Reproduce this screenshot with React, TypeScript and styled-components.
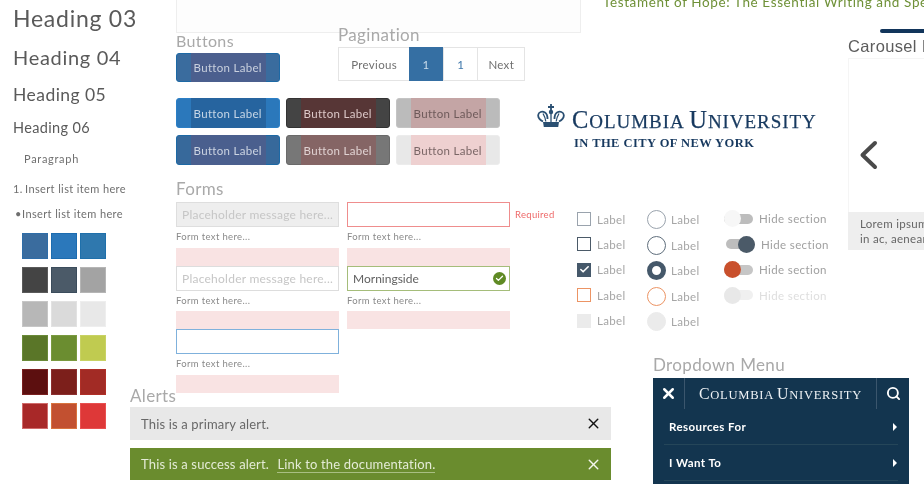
import React from "react";
import styled, { createGlobalStyle } from "styled-components";
import { X, Search, Check } from "lucide-react";

const Global = createGlobalStyle`
  html, body { margin: 0; padding: 0; background: #fff; }
  body { font-family: Lato, "Noto Sans", sans-serif; width: 924px; height: 484px; overflow: hidden; }
`;

const Board = styled.div`
  position: relative;
  width: 924px;
  height: 484px;
  overflow: hidden;
  background: #fff;
  filter: blur(0.6px);
`;

const Area = styled.section<{ $x: number; $y: number; $w?: number; $h?: number }>`
  position: absolute;
  left: ${(p) => p.$x}px;
  top: ${(p) => p.$y}px;
  ${(p) => (p.$w ? `width: ${p.$w}px;` : "")}
  ${(p) => (p.$h ? `height: ${p.$h}px;` : "")}
`;

const SectionTitle = styled.div<{ $size?: number }>`
  font-size: ${(p) => p.$size ?? 17}px;
  line-height: 20px;
  color: #a9a9a9;
  letter-spacing: 0.35px;
  white-space: nowrap;
`;

/* Typography column */
const Type = styled.div`
  display: flex;
  flex-direction: column;
  color: #5a5a5a;
`;
const Head = styled.div<{ $size: number; $h: number; $spacing: number }>`
  font-size: ${(p) => p.$size}px;
  height: ${(p) => p.$h}px;
  line-height: ${(p) => p.$h}px;
  letter-spacing: ${(p) => p.$spacing}px;
  white-space: nowrap;
`;
const Small = styled.div<{ $indent: number; $h: number; $spacing?: number }>`
  padding-left: ${(p) => p.$indent}px;
  height: ${(p) => p.$h}px;
  line-height: ${(p) => p.$h}px;
  font-size: 11px;
  letter-spacing: ${(p) => p.$spacing ?? 0.42}px;
  color: #6f6f6f;
  white-space: nowrap;
`;
const Marker = styled.span<{ $w: number }>`
  display: inline-block;
  width: ${(p) => p.$w}px;
`;

/* Swatches */
const Swatches = styled.div`
  display: grid;
  grid-template-columns: repeat(3, 26px);
  grid-auto-rows: 26px;
  column-gap: 3px;
  row-gap: 8px;
`;
const Swatch = styled.div<{ $c: string; $b: string }>`
  background: ${(p) => p.$c};
  box-sizing: border-box;
  border: 1px solid ${(p) => p.$b};
`;

/* Empty panel on top */
const TopPanel = styled.div`
  box-sizing: border-box;
  height: 100%;
  background: #fdfdfd;
  border: 1px solid #eeeeee;
  border-top: 0;
`;

/* Buttons */
const ButtonRows = styled.div`
  display: flex;
  flex-direction: column;
  gap: 7px;
`;
const ButtonRow = styled.div`
  display: flex;
  gap: 6.5px;
`;
const LabelButton = styled.button<{ $bg: string; $edge: string; $overlay: string; $fg: string; $h?: number }>`
  position: relative;
  width: 103.5px;
  height: ${(p) => p.$h ?? 30}px;
  padding: 0;
  background: ${(p) => p.$bg};
  border: 1px solid ${(p) => p.$edge};
  border-radius: 3px;
  color: ${(p) => p.$fg};
  font-family: inherit;
  font-size: 11.5px;
  letter-spacing: 0.3px;
  &::before {
    content: "";
    position: absolute;
    left: 14px;
    right: 13px;
    top: -1px;
    bottom: -1px;
    background: ${(p) => p.$overlay};
  }
  & > span { position: relative; }
`;

/* Pagination */
const Pager = styled.nav`
  display: flex;
  height: 34px;
  box-sizing: border-box;
  border: 1px solid #e4e4e4;
  background: #fff;
`;
const PageCell = styled.div<{ $w: number; $active?: boolean; $link?: boolean }>`
  width: ${(p) => p.$w}px;
  display: flex;
  align-items: center;
  justify-content: center;
  font-size: 11.5px;
  letter-spacing: 0.3px;
  margin: ${(p) => (p.$active ? "-1px 0" : "0")};
  background: ${(p) => (p.$active ? "#356fa3" : "#fff")};
  color: ${(p) => (p.$active ? "#c9dbea" : p.$link ? "#3f78ab" : "#707070")};
  border-left: ${(p) => (p.$active ? "none" : "1px solid #e4e4e4")};
  &:first-child { border-left: 0; }
`;

/* Logo */
const Logo = styled.div`
  display: flex;
  gap: 7px;
  align-items: flex-start;
  color: #17395f;
  font-family: "Liberation Serif", serif;
`;
const LogoText = styled.div`
  display: flex;
  flex-direction: column;
  white-space: nowrap;
`;
const LogoMain = styled.div`
  margin-top: 3px;
  font-size: 19px;
  line-height: 26px;
  letter-spacing: 0.95px;
  text-transform: uppercase;
  -webkit-text-stroke: 0.25px #17395f;
`;
const Cap = styled.span<{ $size: number }>`
  font-size: ${(p) => p.$size}px;
`;
const LogoSub = styled.div`
  font-size: 12.5px;
  line-height: 14px;
  font-weight: bold;
  margin: 1px 0 0 2px;
  letter-spacing: 0.45px;
`;

/* Forms */
const FormGrid = styled.div`
  display: grid;
  grid-template-columns: 163px 163px;
  column-gap: 8px;
`;
const FormCol = styled.div`
  display: flex;
  flex-direction: column;
`;
const Field = styled.div<{ $bg?: string; $edge: string }>`
  position: relative;
  box-sizing: border-box;
  height: 25px;
  padding: 0 5px;
  display: flex;
  align-items: center;
  background: ${(p) => p.$bg ?? "#fff"};
  border: 1px solid ${(p) => p.$edge};
  font-size: 12px;
  letter-spacing: 0.24px;
  color: #c6c6c6;
  white-space: nowrap;
`;
const FieldValue = styled.span`
  color: #5f5f5f;
  letter-spacing: 0;
`;
const Hint = styled.div<{ $h?: number }>`
  height: ${(p) => p.$h ?? 21}px;
  line-height: 20px;
  font-size: 9.5px;
  letter-spacing: 0.35px;
  color: #8a8a8a;
`;
const PinkBar = styled.div`
  height: 18px;
  background: #f9e3e3;
`;
const Required = styled.span`
  position: absolute;
  left: 167px;
  top: 6px;
  font-size: 9.5px;
  letter-spacing: 0.3px;
  color: #ee6a6a;
`;
const OkBadge = styled.span`
  position: absolute;
  right: 3px;
  top: 5px;
  width: 13px;
  height: 13px;
  border-radius: 50%;
  background: #5f8a24;
  color: #fff;
  display: flex;
  align-items: center;
  justify-content: center;
`;

/* Choice lists */
const ChoiceList = styled.div<{ $gap: number }>`
  display: flex;
  flex-direction: column;
  gap: ${(p) => p.$gap}px;
`;
const Choice = styled.div<{ $gap: number; $h: number }>`
  display: flex;
  align-items: center;
  gap: ${(p) => p.$gap}px;
  height: ${(p) => p.$h}px;
  font-size: 11.5px;
  letter-spacing: 0.35px;
  color: #a6a6a6;
  white-space: nowrap;
`;
const CheckBox = styled.span<{ $edge: string; $bg?: string }>`
  box-sizing: border-box;
  width: 14px;
  height: 14px;
  background: ${(p) => p.$bg ?? "#fff"};
  border: 1px solid ${(p) => p.$edge};
  color: #fff;
  display: flex;
  align-items: center;
  justify-content: center;
`;
const Radio = styled.span<{ $edge: string; $bg?: string; $w?: number }>`
  box-sizing: border-box;
  width: 19px;
  height: 19px;
  border-radius: 50%;
  background: ${(p) => p.$bg ?? "#fff"};
  border: ${(p) => p.$w ?? 1}px solid ${(p) => p.$edge};
`;
const ToggleRow = styled.div<{ $muted?: boolean; $shift?: number }>`
  display: flex;
  align-items: center;
  height: 17px;
  padding-left: ${(p) => p.$shift ?? 0}px;
  font-size: 11.5px;
  letter-spacing: 0.38px;
  color: ${(p) => (p.$muted ? "#dedede" : "#a0a0a0")};
  white-space: nowrap;
`;
const Track = styled.span<{ $bg: string; $on?: boolean }>`
  position: relative;
  display: flex;
  align-items: center;
  justify-content: ${(p) => (p.$on ? "flex-end" : "flex-start")};
  width: 29px;
  height: 10px;
  border-radius: 5px;
  margin-right: 6px;
  background: ${(p) => p.$bg};
`;
const Knob = styled.span<{ $bg: string }>`
  width: 17px;
  height: 17px;
  flex: none;
  border-radius: 50%;
  background: ${(p) => p.$bg};
`;

/* Alerts */
const AlertList = styled.div`
  display: flex;
  flex-direction: column;
  gap: 8px;
`;
const Alert = styled.div<{ $bg: string; $fg: string; $h: number }>`
  box-sizing: border-box;
  height: ${(p) => p.$h}px;
  padding: 0 9px 0 11px;
  display: flex;
  align-items: center;
  justify-content: space-between;
  background: ${(p) => p.$bg};
  color: ${(p) => p.$fg};
  font-size: 13px;
  letter-spacing: 0.16px;
`;
const AlertLink = styled.span`
  margin-left: 5px;
  border-bottom: 1px solid #a9bf83;
  line-height: 14px;
`;
const AlertClose = styled.span<{ $c: string }>`
  display: flex;
  color: ${(p) => p.$c};
`;

/* Dropdown */
const Menu = styled.div`
  height: 106px;
  background: #13354f;
  color: #fff;
  display: flex;
  flex-direction: column;
`;
const MenuHead = styled.div`
  display: grid;
  grid-template-columns: 32px 1fr 33px;
  height: 31px;
`;
const MenuCell = styled.div<{ $divider?: "l" | "r" }>`
  display: flex;
  align-items: center;
  justify-content: center;
  ${(p) => (p.$divider === "r" ? "border-right: 1px solid #3b566d;" : "")}
  ${(p) => (p.$divider === "l" ? "border-left: 1px solid #3b566d;" : "")}
`;
const MenuBrand = styled.div`
  font-family: "Liberation Serif", serif;
  text-transform: uppercase;
  font-size: 12.6px;
  letter-spacing: 0.7px;
  color: #eef2f5;
  white-space: nowrap;
`;
const MenuRow = styled.div`
  margin: 0 11px;
  padding: 0 1px 0 5px;
  height: 35px;
  display: flex;
  align-items: center;
  justify-content: space-between;
  border-bottom: 1px solid #254659;
  font-size: 11.5px;
  font-weight: bold;
  letter-spacing: 0.42px;
`;
const Caret = styled.span`
  width: 0;
  height: 0;
  border-left: 4px solid #fff;
  border-top: 4px solid transparent;
  border-bottom: 4px solid transparent;
`;

/* Carousel */
const Carousel = styled.div`
  display: flex;
  flex-direction: column;
  height: 213px;
`;
const CarouselTitle = styled.div`
  font-family: "Liberation Sans", sans-serif;
  font-size: 16.5px;
  line-height: 18px;
  height: 21px;
  letter-spacing: 0.35px;
  color: #5c5c5c;
  white-space: nowrap;
`;
const CarouselStage = styled.div`
  box-sizing: border-box;
  flex: 1;
  padding: 38px 0 0 10px;
  display: flex;
  align-items: center;
  border: 1px solid #f5f5f5;
  border-bottom: 0;
`;
const Caption = styled.div`
  height: 38px;
  padding: 4px 0 0 12px;
  box-sizing: border-box;
  background: #eeeeee;
  color: #666;
  font-size: 11.5px;
  line-height: 15px;
  letter-spacing: 0.3px;
  white-space: nowrap;
`;
const BookLine = styled.div`
  margin-top: -6px;
  font-size: 13.5px;
  line-height: 16px;
  letter-spacing: 0.62px;
  color: #6f9138;
  white-space: nowrap;
`;
const AccentBar = styled.div`
  height: 4px;
  border-radius: 2px 0 0 2px;
  background: #12355b;
`;

const swatches = [
  ["#3a6c9e", "#2e6da8"], ["#2b78bb", "#1c6cb0"], ["#2f78ae", "#1f70ab"],
  ["#444444", "#5a5a5a"], ["#4b5a68", "#3b4c5c"], ["#a3a3a3", "#b5b5b5"],
  ["#b7b7b7", "#c6c6c6"], ["#dadada", "#e2e2e2"], ["#e8e8e8", "#eeeeee"],
  ["#5a7628", "#6a8a38"], ["#6b8d30", "#7a9a40"], ["#c0cb50", "#c8d264"],
  ["#5c0f0f", "#7a2020"], ["#7c1f1b", "#8c3030"], ["#a22b25", "#b03028"],
  ["#a82828", "#d06a6a"], ["#c25030", "#d8733e"], ["#de3838", "#e85050"],
];

const Crown = () => (
  <svg width="28" height="24" viewBox="0 0 28 24" fill="none" stroke="#2a4f72" strokeWidth="1.8">
    <path d="M14 0v8M11 3h6" />
    <circle cx="14" cy="8" r="2.2" fill="#2a4f72" stroke="none" />
    <path d="M6 17.500C3 16 1 13.500 1.200 11 1.500 8 5 6.800 8 8.500 10 9.800 10.500 12 10.500 15M22 17.500c3-1.500 5-4 4.800-6.500C26.500 8 23 6.800 20 8.500 18 9.800 17.500 12 17.500 15" />
    <path d="M14 10v8M6 9.500c1.500 2.500 2.500 5 2.800 8M22 9.500c-1.500 2.500-2.500 5-2.800 8" strokeWidth="1.300" />
    <path d="M6 18h16l-.8 5H6.800z" fill="#2a4f72" stroke="none" />
  </svg>
);

const Chevron = () => (
  <svg width="19" height="30" viewBox="0 0 19 30" fill="none" stroke="#4a4a4a" strokeWidth="4" strokeLinecap="round" strokeLinejoin="round">
    <path d="M16 3 3.500 15 16 27" />
  </svg>
);

const Lbtn = ({ v }: { v: [string, string, string, string] }) => (
  <LabelButton $bg={v[0]} $edge={v[1]} $overlay={v[2]} $fg={v[3]}>
    <span>Button Label</span>
  </LabelButton>
);

export default function App() {
  return (
    <Board>
      <Global />

      <Area $x={13} $y={3}>
        <Type>
          <Head $size={23} $h={31} $spacing={0.75}>Heading 03</Head>
          <Head $size={20} $h={47} $spacing={0.7}>Heading 04</Head>
          <Head $size={17.5} $h={27} $spacing={0.45}>Heading 05</Head>
          <Head $size={14.5} $h={39} $spacing={0.35}>Heading 06</Head>
          <Small $indent={11} $h={23} $spacing={0.7}>Paragraph</Small>
          <Small $indent={0} $h={37} $spacing={0.38}><Marker $w={12}>1.</Marker>Insert list item here</Small>
          <Small $indent={2} $h={14} $spacing={0.38}><Marker $w={7}>•</Marker>Insert list item here</Small>
        </Type>
      </Area>

      <Area $x={22} $y={233}>
        <Swatches>
          {swatches.map(([c, b], i) => (
            <Swatch key={i} $c={c} $b={b} />
          ))}
        </Swatches>
      </Area>

      <Area $x={176} $y={0} $w={405} $h={33}>
        <TopPanel />
      </Area>

      <Area $x={176} $y={31}>
        <SectionTitle $size={16}>Buttons</SectionTitle>
      </Area>
      <Area $x={176} $y={53}>
        <LabelButton $bg="#3a6c9e" $edge="#1d69a5" $overlay="#4b5f8e" $fg="#c9d0de" $h={29}>
          <span>Button Label</span>
        </LabelButton>
      </Area>
      <Area $x={176} $y={98}>
        <ButtonRows>
          <ButtonRow>
            <Lbtn v={["#2b78bb", "#2b7fc6", "#26649f", "#c6d6e6"]} />
            <Lbtn v={["#444444", "#333333", "#573636", "#ddc8c8"]} />
            <Lbtn v={["#bbbbbb", "#c4c4c4", "#c4a5a5", "#6e5a5a"]} />
          </ButtonRow>
          <ButtonRow>
            <Lbtn v={["#37699b", "#1d69a5", "#4a5f8e", "#ccd4e2"]} />
            <Lbtn v={["#777777", "#6a6a6a", "#856565", "#e0d2d2"]} />
            <Lbtn v={["#e8e8e8", "#ececec", "#eed0d0", "#7a6666"]} />
          </ButtonRow>
        </ButtonRows>
      </Area>

      <Area $x={338} $y={25}>
        <SectionTitle>Pagination</SectionTitle>
      </Area>
      <Area $x={338} $y={47} $w={187}>
        <Pager>
          <PageCell $w={71}>Previous</PageCell>
          <PageCell $w={34} $active>1</PageCell>
          <PageCell $w={34} $link>1</PageCell>
          <PageCell $w={46}>Next</PageCell>
        </Pager>
      </Area>

      <Area $x={537} $y={104}>
        <Logo>
          <Crown />
          <LogoText>
            <LogoMain><Cap $size={24.5}>C</Cap>olumbia <Cap $size={24.5}>U</Cap>niversity</LogoMain>
            <LogoSub>IN THE CITY OF NEW YORK</LogoSub>
          </LogoText>
        </Logo>
      </Area>

      <Area $x={176} $y={179}>
        <SectionTitle>Forms</SectionTitle>
      </Area>
      <Area $x={176} $y={202}>
        <FormGrid>
          <FormCol>
            <Field $bg="#eeeeee" $edge="#dedede">Placeholder message here...</Field>
            <Hint>Form text here...</Hint>
            <PinkBar />
            <Field $edge="#dddddd">Placeholder message here...</Field>
            <Hint $h={20}>Form text here...</Hint>
            <PinkBar />
            <Field $edge="#7fb1dc" />
            <Hint>Form text here...</Hint>
            <PinkBar />
          </FormCol>
          <FormCol>
            <Field $edge="#ef8d8d">
              <Required>Required</Required>
            </Field>
            <Hint>Form text here...</Hint>
            <PinkBar />
            <Field $edge="#a5bd7a">
              <FieldValue>Morningside</FieldValue>
              <OkBadge>
                <Check size={9} strokeWidth={3.5} />
              </OkBadge>
            </Field>
            <Hint $h={20}>Form text here...</Hint>
            <PinkBar />
          </FormCol>
        </FormGrid>
      </Area>

      <Area $x={577} $y={212}>
        <ChoiceList $gap={11.4}>
          <Choice $gap={6} $h={14}><CheckBox $edge="#9aa3ad" />Label</Choice>
          <Choice $gap={6} $h={14}><CheckBox $edge="#4b5a68" />Label</Choice>
          <Choice $gap={6} $h={14}>
            <CheckBox $edge="#45586a" $bg="#45586a"><Check size={11} strokeWidth={3.5} /></CheckBox>
            Label
          </Choice>
          <Choice $gap={6} $h={14}><CheckBox $edge="#ec9464" />Label</Choice>
          <Choice $gap={6} $h={14}><CheckBox $edge="#ebebeb" $bg="#ebebeb" />Label</Choice>
        </ChoiceList>
      </Area>

      <Area $x={647} $y={210}>
        <ChoiceList $gap={6.5}>
          <Choice $gap={5} $h={19}><Radio $edge="#9aa3ad" />Label</Choice>
          <Choice $gap={5} $h={19}><Radio $edge="#5f6e7c" $w={1.5} />Label</Choice>
          <Choice $gap={5} $h={19}><Radio $edge="#45586a" $w={5} />Label</Choice>
          <Choice $gap={5} $h={19}><Radio $edge="#ec9464" />Label</Choice>
          <Choice $gap={5} $h={19}><Radio $edge="#ebebeb" $bg="#ebebeb" />Label</Choice>
        </ChoiceList>
      </Area>

      <Area $x={724} $y={210}>
        <ChoiceList $gap={8.5}>
          <ToggleRow>
            <Track $bg="#bdbdbd"><Knob $bg="#f7f7f7" /></Track>Hide section
          </ToggleRow>
          <ToggleRow $shift={2}>
            <Track $bg="#bdbdbd" $on><Knob $bg="#4b5a68" /></Track>Hide section
          </ToggleRow>
          <ToggleRow>
            <Track $bg="#c6c6c6"><Knob $bg="#c9502c" /></Track>Hide section
          </ToggleRow>
          <ToggleRow $muted>
            <Track $bg="#f0f0f0"><Knob $bg="#e8e8e8" /></Track>Hide section
          </ToggleRow>
        </ChoiceList>
      </Area>

      <Area $x={130} $y={386}>
        <SectionTitle>Alerts</SectionTitle>
      </Area>
      <Area $x={130} $y={407} $w={481}>
        <AlertList>
          <Alert $bg="#e8e8e8" $fg="#686868" $h={33}>
            This is a primary alert.
            <AlertClose $c="#111"><X size={17} strokeWidth={2} /></AlertClose>
          </Alert>
          <Alert $bg="#6a8c2e" $fg="#e4ebd6" $h={32}>
            <span>This is a success alert. <AlertLink>Link to the documentation.</AlertLink></span>
            <AlertClose $c="#f4f6ee"><X size={17} strokeWidth={2} /></AlertClose>
          </Alert>
        </AlertList>
      </Area>

      <Area $x={653} $y={355}>
        <SectionTitle>Dropdown Menu</SectionTitle>
      </Area>
      <Area $x={653} $y={378} $w={256}>
        <Menu>
          <MenuHead>
            <MenuCell $divider="r"><X size={17} strokeWidth={3.5} /></MenuCell>
            <MenuCell>
              <MenuBrand><Cap $size={15.8}>C</Cap>olumbia <Cap $size={15.8}>U</Cap>niversity</MenuBrand>
            </MenuCell>
            <MenuCell $divider="l"><Search size={15} strokeWidth={3} /></MenuCell>
          </MenuHead>
          <MenuRow>Resources For<Caret /></MenuRow>
          <MenuRow>I Want To<Caret /></MenuRow>
        </Menu>
      </Area>

      <Area $x={848} $y={37} $w={120}>
        <Carousel>
          <CarouselTitle>Carousel Items</CarouselTitle>
          <CarouselStage>
            <Chevron />
          </CarouselStage>
          <Caption>
            Lorem ipsum dolor
            <br />
            in ac, aenean amet
          </Caption>
        </Carousel>
      </Area>

      <Area $x={603} $y={0} $w={321}>
        <BookLine>Testament of Hope: The Essential Writing and Speeches</BookLine>
      </Area>
      <Area $x={880} $y={29} $w={44}>
        <AccentBar />
      </Area>
    </Board>
  );
}
